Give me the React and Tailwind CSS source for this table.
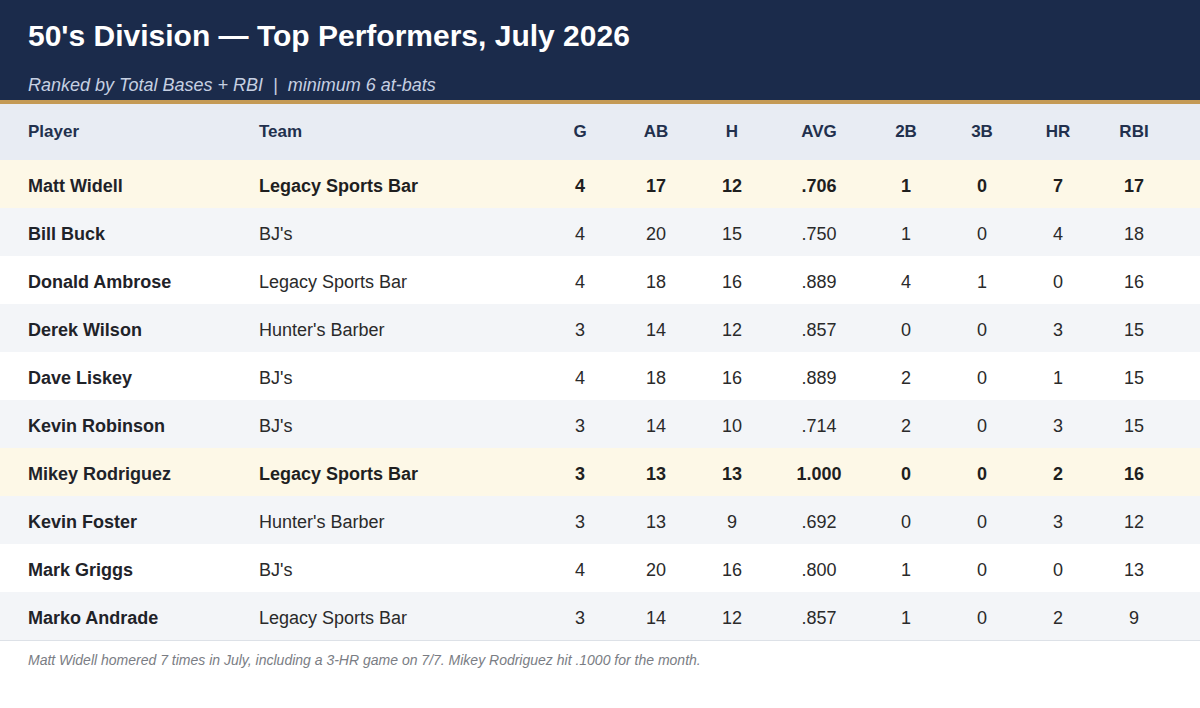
import React from "react";

const players = [
  { name: "Matt Widell", team: "Legacy Sports Bar", g: 4, ab: 17, h: 12, avg: ".706", d: 1, t: 0, hr: 7, rbi: 17, hot: true },
  { name: "Bill Buck", team: "BJ's", g: 4, ab: 20, h: 15, avg: ".750", d: 1, t: 0, hr: 4, rbi: 18 },
  { name: "Donald Ambrose", team: "Legacy Sports Bar", g: 4, ab: 18, h: 16, avg: ".889", d: 4, t: 1, hr: 0, rbi: 16 },
  { name: "Derek Wilson", team: "Hunter's Barber", g: 3, ab: 14, h: 12, avg: ".857", d: 0, t: 0, hr: 3, rbi: 15 },
  { name: "Dave Liskey", team: "BJ's", g: 4, ab: 18, h: 16, avg: ".889", d: 2, t: 0, hr: 1, rbi: 15 },
  { name: "Kevin Robinson", team: "BJ's", g: 3, ab: 14, h: 10, avg: ".714", d: 2, t: 0, hr: 3, rbi: 15 },
  { name: "Mikey Rodriguez", team: "Legacy Sports Bar", g: 3, ab: 13, h: 13, avg: "1.000", d: 0, t: 0, hr: 2, rbi: 16, hot: true },
  { name: "Kevin Foster", team: "Hunter's Barber", g: 3, ab: 13, h: 9, avg: ".692", d: 0, t: 0, hr: 3, rbi: 12 },
  { name: "Mark Griggs", team: "BJ's", g: 4, ab: 20, h: 16, avg: ".800", d: 1, t: 0, hr: 0, rbi: 13 },
  { name: "Marko Andrade", team: "Legacy Sports Bar", g: 3, ab: 14, h: 12, avg: ".857", d: 1, t: 0, hr: 2, rbi: 9 },
];

// pad | player | team | G AB H | AVG | 2B 3B HR RBI | pad
const cols = "grid grid-cols-[28px_231px_283px_76px_76px_76px_98px_76px_76px_76px_76px_28px] items-center";

export default function App() {
  return (
    <div className="w-[1200px] h-[708px] bg-white font-['Liberation_Sans',Arial,sans-serif] overflow-hidden">
      {/* Header */}
      <header className="h-[100px] bg-[#1b2b4b] px-7 pt-[17px]">
        <h1 className="text-[30px] leading-[38px] font-bold text-white">
          50's Division — Top Performers, July 2026
        </h1>
        <p className="mt-[19px] text-[18px] leading-[22px] italic text-[#c6d0e2]">
          Ranked by Total Bases + RBI &nbsp;|&nbsp; minimum 6 at-bats
        </p>
      </header>
      <div className="h-1 bg-[#c49a55]" />

      {/* Column headings */}
      <div className={`${cols} h-[56px] bg-[#e8ecf3] text-[17px] font-bold text-[#22304d]`}>
        <span />
        <span>Player</span>
        <span>Team</span>
        <span className="text-center">G</span>
        <span className="text-center">AB</span>
        <span className="text-center">H</span>
        <span className="text-center">AVG</span>
        <span className="text-center">2B</span>
        <span className="text-center">3B</span>
        <span className="text-center">HR</span>
        <span className="text-center">RBI</span>
        <span />
      </div>

      {/* Rows */}
      <div className="border-b border-[#dde1e7]">
        {players.map((p, i) => {
          const bg = p.hot ? "bg-[#fdf8e7]" : i % 2 === 1 ? "bg-[#f3f5f8]" : "bg-white";
          const stat = p.hot ? "font-bold text-[#1f1f1f]" : "text-[#2a2a2a]";
          return (
            <div key={p.name} className={`${cols} h-12 pt-1 text-[18px] ${bg}`}>
              <span />
              <span className="font-bold text-[#1f2329]">{p.name}</span>
              <span className={stat}>{p.team}</span>
              <span className={`text-center ${stat}`}>{p.g}</span>
              <span className={`text-center ${stat}`}>{p.ab}</span>
              <span className={`text-center ${stat}`}>{p.h}</span>
              <span className={`text-center ${stat}`}>{p.avg}</span>
              <span className={`text-center ${stat}`}>{p.d}</span>
              <span className={`text-center ${stat}`}>{p.t}</span>
              <span className={`text-center ${stat}`}>{p.hr}</span>
              <span className={`text-center ${stat}`}>{p.rbi}</span>
              <span />
            </div>
          );
        })}
      </div>

      <p className="px-7 pt-[9px] text-[14px] italic text-[#7a7d84]">
        Matt Widell homered 7 times in July, including a 3-HR game on 7/7. Mikey Rodriguez hit .1000 for the month.
      </p>
    </div>
  );
}
